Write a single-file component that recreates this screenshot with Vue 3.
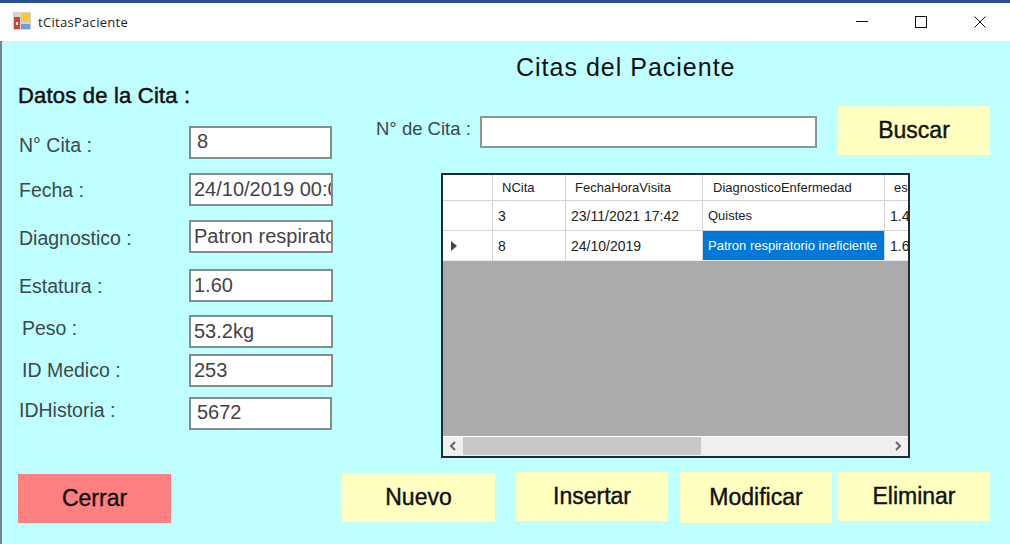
<script setup>
const fields = [
  { label: "N° Cita :", value: "8", cls: "f-cita" },
  { label: "Fecha :", value: "24/10/2019 00:00:00", cls: "f-fecha" },
  { label: "Diagnostico :", value: "Patron respiratorio ineficiente", cls: "f-diag" },
  { label: "Estatura :", value: "1.60", cls: "f-estatura" },
  { label: "Peso :", value: "53.2kg", cls: "f-peso" },
  { label: "ID Medico :", value: "253", cls: "f-medico" },
  { label: "IDHistoria :", value: "5672", cls: "f-historia" },
];

const rows = [
  { id: "3", fecha: "23/11/2021 17:42", diag: "Quistes", est: "1.45", active: false },
  { id: "8", fecha: "24/10/2019", diag: "Patron respiratorio ineficiente", est: "1.60", active: true },
];
</script>

<template>
  <div class="window">
    <div class="titlebar">
      <svg class="app-icon" width="18" height="18" viewBox="0 0 18 18">
        <rect width="18" height="18" fill="#d8d4cc" />
        <rect x="1" y="5" width="6" height="12" fill="#c9463f" />
        <rect x="3" y="10" width="2" height="3" fill="#f4e4e0" />
        <rect x="8" y="1" width="9" height="9" fill="#f3cb3c" />
        <rect x="8" y="12" width="9" height="5" fill="#6f9ae0" />
      </svg>
      <span class="app-title">tCitasPaciente</span>
      <div class="win-controls">
        <svg width="12" height="12" viewBox="0 0 12 12"><path d="M0 5.5H12" stroke="#111" fill="none" /></svg>
        <svg width="12" height="12" viewBox="0 0 12 12"><rect x="0.5" y="0.5" width="11" height="11" stroke="#111" fill="none" /></svg>
        <svg width="12" height="12" viewBox="0 0 12 12"><path d="M0.5 0.5L11.5 11.5M11.5 0.5L0.5 11.5" stroke="#111" fill="none" /></svg>
      </div>
    </div>

    <div class="form">
      <div class="main">
        <section class="datos">
          <h2 class="datos-title">Datos de la Cita :</h2>
          <div class="fields">
            <template v-for="f in fields" :key="f.label">
              <label :class="['field-label', f.cls]">{{ f.label }}</label>
              <input class="field-input" :class="f.cls" :value="f.value" readonly />
            </template>
          </div>
        </section>

        <section class="citas">
          <h1 class="citas-title">Citas del Paciente</h1>
          <div class="search">
            <label class="search-label">N° de Cita :</label>
            <input class="search-input" readonly />
            <button class="btn search-btn">Buscar</button>
          </div>

          <div class="grid">
            <div class="grid-rows">
              <table class="table">
                <colgroup>
                  <col class="c-head" />
                  <col class="c-id" />
                  <col class="c-fecha" />
                  <col class="c-diag" />
                  <col class="c-est" />
                </colgroup>
                <thead>
                  <tr>
                    <th></th>
                    <th>NCita</th>
                    <th>FechaHoraVisita</th>
                    <th>DiagnosticoEnfermedad</th>
                    <th>estatura</th>
                  </tr>
                </thead>
                <tbody>
                  <tr v-for="r in rows" :key="r.id">
                    <td class="row-head">
                      <span v-if="r.active" class="row-arrow"></span>
                    </td>
                    <td class="cell-num">{{ r.id }}</td>
                    <td class="cell-num">{{ r.fecha }}</td>
                    <td :class="{ selected: r.active }">{{ r.diag }}</td>
                    <td class="cell-num">{{ r.est }}</td>
                  </tr>
                </tbody>
              </table>
            </div>
            <div class="scrollbar">
              <svg class="sb-arrow" width="8" height="10" viewBox="0 0 8 10"><path d="M6 1L2 5L6 9" stroke="#666" stroke-width="2" fill="none" /></svg>
              <div class="sb-track"><div class="sb-thumb"></div></div>
              <svg class="sb-arrow" width="8" height="10" viewBox="0 0 8 10"><path d="M2 1L6 5L2 9" stroke="#666" stroke-width="2" fill="none" /></svg>
            </div>
          </div>
        </section>
      </div>

      <div class="actions">
        <button class="btn btn-cerrar">Cerrar</button>
        <button class="btn btn-nuevo">Nuevo</button>
        <button class="btn btn-insertar">Insertar</button>
        <button class="btn btn-modificar">Modificar</button>
        <button class="btn btn-eliminar">Eliminar</button>
      </div>
    </div>
  </div>
</template>

<style>
html,
body {
  margin: 0;
  overflow: hidden;
}
</style>

<style scoped>
.window {
  width: 1010px;
  height: 544px;
  display: flex;
  flex-direction: column;
  box-sizing: border-box;
  border-top: 3px solid #2b4f8a;
  font-family: "Liberation Sans", Arial, sans-serif;
  background: #bfffff;
  overflow: hidden;
}

.titlebar {
  height: 38px;
  flex: none;
  display: flex;
  align-items: center;
  background: #fff;
  padding-left: 13px;
  border-left: 2px solid #fff;
  box-sizing: border-box;
}

.app-icon {
  margin-right: 5px;
  margin-top: -2px;
  margin-left: -2px;
}

.app-title {
  font-family: "Open Sans", sans-serif;
  font-size: 13px;
  letter-spacing: 0.3px;
  color: #222;
  margin-left: 2px;
  margin-top: -1px;
}

.win-controls {
  margin-left: auto;
  display: flex;
  gap: 47px;
  padding-right: 24px;
  margin-top: -1px;
}

.win-controls svg {
  display: block;
}

.form {
  flex: 1;
  display: flex;
  flex-direction: column;
  border-left: 2px solid #74868a;
}

.main {
  height: 431px;
  flex: none;
  display: flex;
}

.datos {
  width: 340px;
  flex: none;
  padding-left: 16px;
  box-sizing: border-box;
}

.datos-title {
  margin: 41px 0 0;
  height: 28px;
  line-height: 28px;
  font-size: 22px;
  letter-spacing: 0.2px;
  font-weight: 400;
  -webkit-text-stroke: 0.5px #111;
  color: #111;
}

.fields {
  margin-top: 16px;
  display: grid;
  grid-template-columns: 171px 144px;
  grid-template-rows: 47px 47px 49px 46px 39px 43px 33px;
}

.field-label {
  font-size: 19.5px;
  line-height: 33px;
  height: 33px;
  margin-left: 1px;
  color: #3a4a4c;
}

.field-input {
  width: 144px;
  height: 33px;
  box-sizing: border-box;
  border: 2px solid #828e8e;
  background: #fff;
  padding: 0 0 0 3px;
  margin: 0;
  font-family: inherit;
  font-size: 20px;
  color: #444;
  outline: none;
}

.field-label.f-cita {
  margin-top: 3px;
}
.field-label.f-fecha {
  margin-top: 1px;
}
.field-label.f-diag {
  margin-top: 2px;
}
.field-label.f-estatura {
  margin-top: 1px;
}
.field-label.f-peso {
  margin-top: -3px;
  margin-left: 4px;
}
.field-label.f-medico {
  margin-left: 4px;
}
.field-label.f-historia {
  margin-top: -3px;
}

.field-input.f-cita {
  width: 143px;
  padding-left: 6px;
  padding-bottom: 3px;
}

.field-input.f-historia {
  width: 143px;
  padding-left: 6px;
  padding-bottom: 2px;
}

.citas {
  flex: 1;
  min-width: 0;
}

.citas-title {
  margin: 11px 0 0 174px;
  height: 30px;
  line-height: 30px;
  font-size: 25px;
  letter-spacing: 1px;
  font-weight: 400;
  color: #111;
}

.search {
  margin-top: 24px;
  padding-left: 34px;
  display: flex;
  align-items: flex-start;
}

.search-label {
  width: 104px;
  flex: none;
  font-size: 18.5px;
  line-height: 32px;
  margin-top: 7px;
  color: #3a4a4c;
}

.search-input {
  width: 337px;
  height: 32px;
  flex: none;
  box-sizing: border-box;
  margin: 10px 0 0;
  border: 2px solid #8c9696;
  background: #fff;
  outline: none;
}

.search-btn {
  margin-left: 21px;
}

.btn {
  width: 152px;
  height: 49px;
  flex: none;
  border: none;
  padding: 0;
  background: #ffffc0;
  font-family: inherit;
  font-size: 23px;
  -webkit-text-stroke: 0.4px #111;
  color: #111;
}

.grid {
  width: 469px;
  height: 285px;
  margin: 18px 0 0 99px;
  box-sizing: border-box;
  border: 2px solid #1f2d33;
  background: #ababab;
  display: flex;
  flex-direction: column;
}

.grid-rows {
  flex: 1;
  overflow: hidden;
}

.table {
  table-layout: fixed;
  width: 466px;
  border-collapse: separate;
  border-spacing: 0;
  font-size: 13px;
  color: #222;
}

.c-head {
  width: 50px;
}
.c-id {
  width: 73px;
}
.c-fecha {
  width: 137px;
}
.c-diag {
  width: 182px;
}
.c-est {
  width: 24px;
}

.table th,
.table td {
  padding: 0 0 0 5px;
  background: #fff;
  border-right: 1px solid #d4d4d4;
  border-bottom: 1px solid #d4d4d4;
  overflow: hidden;
  white-space: nowrap;
  box-sizing: border-box;
  font-weight: 400;
  text-align: left;
}

.table th {
  height: 26px;
  padding-left: 9px;
}

.table th:nth-child(4) {
  padding-left: 10px;
}

.table td {
  height: 30px;
}

.table td.cell-num {
  font-size: 14px;
}

.table td.selected {
  background: #0078d7;
  color: #fff;
}

.table td:last-child,
.table th:last-child {
  border-right: none;
}

.table tbody tr:last-child td {
  border-bottom: 1px solid #e8e8e8;
}

.row-arrow {
  display: block;
  width: 0;
  height: 0;
  margin-left: 3px;
  border-left: 6px solid #444;
  border-top: 5px solid transparent;
  border-bottom: 5px solid transparent;
}

.scrollbar {
  flex: none;
  height: 20px;
  box-sizing: border-box;
  display: flex;
  align-items: center;
  background: #efefef;
  border-top: 1px solid #fff;
  padding-bottom: 1px;
}

.sb-arrow {
  flex: none;
  margin: 0 6px;
}

.sb-track {
  flex: 1;
  align-self: stretch;
}

.sb-thumb {
  width: 238px;
  height: 100%;
  background: #c8c8c8;
}

.actions {
  flex: 1;
  display: flex;
  align-items: flex-start;
  padding-left: 16px;
}

.btn-cerrar {
  background: #ff8080;
  margin-top: 2px;
  width: 153px;
}

.btn-nuevo {
  margin-top: 1px;
  margin-left: 171px;
  width: 153px;
}

.btn-insertar {
  margin-left: 21px;
}

.btn-modificar {
  margin-left: 12px;
  height: 51px;
}

.btn-eliminar {
  margin-left: 6px;
}
</style>
